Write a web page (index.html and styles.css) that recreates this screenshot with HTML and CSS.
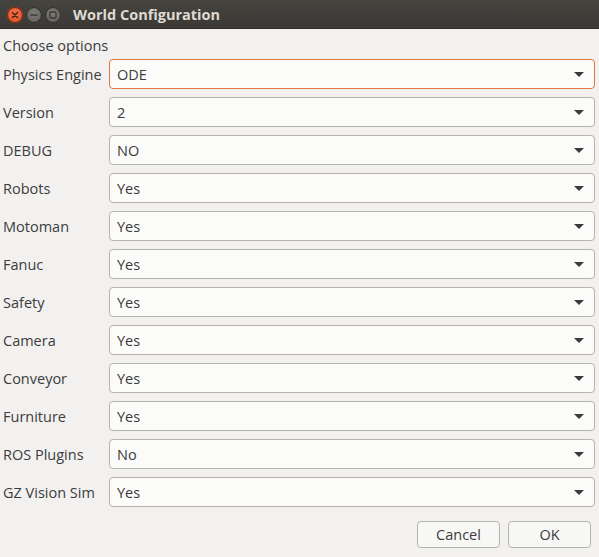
FILE: index.html
```html
<!DOCTYPE html>
<html>
<head>
<meta charset="utf-8">
<link rel="stylesheet" href="styles.css">
</head>
<body>
<div class="window">
  <div class="titlebar">
    <div class="wbtns">
      <span class="wb close"><svg width="16" height="16" viewBox="0 0 16 16"><path d="M5.5 5.5 L10.5 10.5 M10.5 5.5 L5.5 10.5" stroke="#4a2015" stroke-width="1.5" stroke-linecap="round"/></svg></span>
      <span class="wb mini"><svg width="16" height="16" viewBox="0 0 16 16"><path d="M4.5 8 H11.5" stroke="#3a3934" stroke-width="1.5"/></svg></span>
      <span class="wb maxi"><svg width="16" height="16" viewBox="0 0 16 16"><rect x="5" y="5" width="6" height="6" rx="1" fill="none" stroke="#3a3934" stroke-width="1.3"/></svg></span>
    </div>
    <div class="title">World Configuration</div>
  </div>
  <div class="content">
    <div class="heading">Choose options</div>
    <div class="form">
      <div class="row"><label>Physics Engine</label><div class="combo focus"><span>ODE</span><i class="arrow"></i></div></div>
      <div class="row"><label>Version</label><div class="combo"><span>2</span><i class="arrow"></i></div></div>
      <div class="row"><label>DEBUG</label><div class="combo"><span>NO</span><i class="arrow"></i></div></div>
      <div class="row"><label>Robots</label><div class="combo"><span>Yes</span><i class="arrow"></i></div></div>
      <div class="row"><label>Motoman</label><div class="combo"><span>Yes</span><i class="arrow"></i></div></div>
      <div class="row"><label>Fanuc</label><div class="combo"><span>Yes</span><i class="arrow"></i></div></div>
      <div class="row"><label>Safety</label><div class="combo"><span>Yes</span><i class="arrow"></i></div></div>
      <div class="row"><label>Camera</label><div class="combo"><span>Yes</span><i class="arrow"></i></div></div>
      <div class="row"><label>Conveyor</label><div class="combo"><span>Yes</span><i class="arrow"></i></div></div>
      <div class="row"><label>Furniture</label><div class="combo"><span>Yes</span><i class="arrow"></i></div></div>
      <div class="row"><label>ROS Plugins</label><div class="combo"><span>No</span><i class="arrow"></i></div></div>
      <div class="row"><label>GZ Vision Sim</label><div class="combo"><span>Yes</span><i class="arrow"></i></div></div>
    </div>
    <div class="buttons">
      <button class="btn">Cancel</button>
      <button class="btn">OK</button>
    </div>
  </div>
</div>
</body>
</html>
```
FILE: styles.css
```css
* { box-sizing: border-box; }
html, body { margin: 0; padding: 0; }
body {
  width: 599px;
  height: 557px;
  overflow: hidden;
  background: #f2f1f0;
  font-family: "Open Sans", "DejaVu Sans", sans-serif;
  font-size: 14.5px;
  color: #3c3c3c;
}
.window { display: flex; flex-direction: column; height: 557px; }
.titlebar {
  height: 29px;
  background: linear-gradient(#45443f, #3a3935);
  display: flex;
  align-items: center;
  padding-left: 7px;
  border-bottom: 1px solid #2e2d2a;
}
.wbtns { display: flex; gap: 3px; margin-top: 2px; }
.wb {
  width: 16px; height: 16px;
  border-radius: 50%;
  display: flex;
  align-items: center;
  justify-content: center;
}
.wb.close { background: radial-gradient(circle at 50% 40%, #f5734b, #d64a23); box-shadow: 0 0 0 1px #7a2a12 inset; }
.wb.mini, .wb.maxi { background: radial-gradient(circle at 50% 40%, #7d7c76, #5b5a55); box-shadow: 0 0 0 1px #2d2c29 inset; }
.title {
  margin-left: 12px;
  color: #dfdbd2;
  font-weight: bold;
  font-size: 14.5px;
  margin-top: 1px;
}
.content { flex: 1; padding: 7px 4px 0 3px; display: flex; flex-direction: column; }
.heading { height: 23px; line-height: 20px; }
.form { display: flex; flex-direction: column; gap: 8px; }
.row { display: flex; align-items: center; height: 30px; }
.row label { width: 106px; flex: none; }
.combo {
  flex: 1;
  height: 30px;
  border: 1px solid #b6b3ae;
  border-radius: 4px;
  background: #fbfbfa;
  display: flex;
  align-items: center;
  padding-left: 7px;
  padding-right: 10px;
  color: #3c3c3c;
}
.combo.focus { border-color: #e3763e; }
.combo span { flex: 1; }
.arrow {
  width: 0; height: 0;
  border-left: 5px solid transparent;
  border-right: 5px solid transparent;
  border-top: 5px solid #3c3c3c;
}
.buttons {
  display: flex;
  justify-content: flex-end;
  gap: 8px;
  margin-top: 14px;
  margin-right: 4px;
}
.btn {
  width: 83px;
  height: 27px;
  font-family: inherit;
  font-size: 14.5px;
  color: #3c3c3c;
  background: #f7f7f6;
  border: 1px solid #b6b3ae;
  border-radius: 4px;
  padding: 0;
}
```
